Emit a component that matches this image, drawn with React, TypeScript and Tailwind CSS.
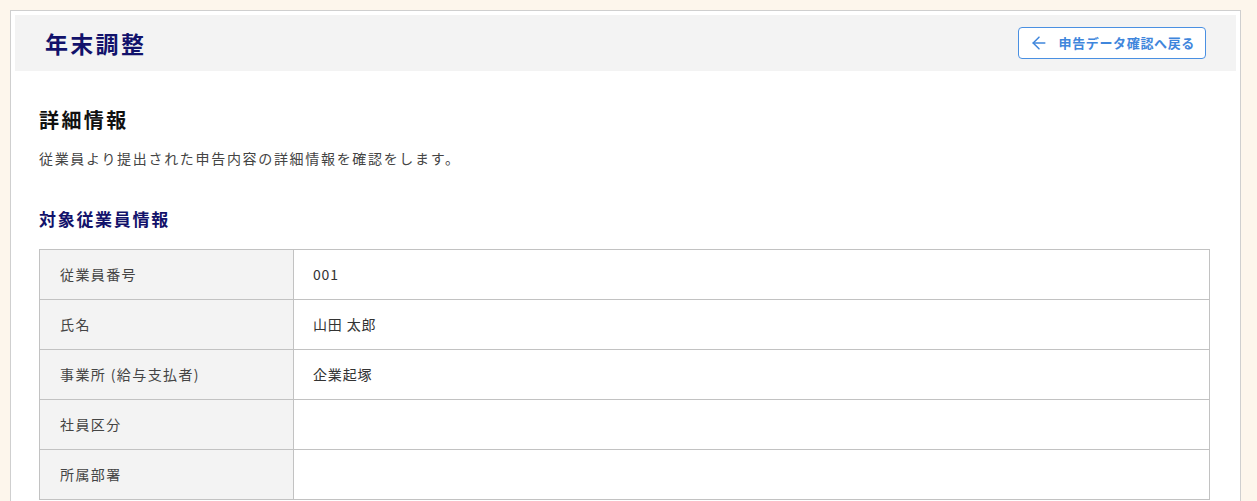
import { ArrowLeft } from "lucide-react";

type Row = { label: string; value: string };

const rows: Row[] = [
  { label: "従業員番号", value: "001" },
  { label: "氏名", value: "山田 太郎" },
  { label: "事業所 (給与支払者)", value: "企業起塚" },
  { label: "社員区分", value: "" },
  { label: "所属部署", value: "" },
];

export default function App() {
  return (
    <div
      className="min-h-screen bg-[#fdf6ec] pb-[10px] pl-[10px] pr-[16px] pt-[10px] text-[#333]"
      style={{ fontFamily: '"Noto Sans CJK JP", "Noto Sans", sans-serif' }}
    >
      <div className="border border-[#cfcfcf] bg-white p-[4px]">
        <header className="flex h-[56px] items-center justify-between bg-[#f3f3f3] pl-[30px] pr-[30px]">
          <h1 className="text-[23px] font-bold leading-none tracking-[0.1em] text-[#12126b]">
            年末調整
          </h1>
          <button
            type="button"
            className="flex h-[32px] items-center gap-[9px] rounded-[4px] border border-[#4a90e2] bg-white pl-[10px] pr-[10px] text-[13px] font-bold tracking-[0.05em] text-[#3f86dc]"
          >
            <ArrowLeft size={20} strokeWidth={1.8} />
            申告データ確認へ戻る
          </button>
        </header>

        <main className="pl-[24px] pr-[26px] pt-[35px]">
          <h2 className="text-[20px] font-bold leading-[28px] tracking-[0.12em] text-[#111]">
            詳細情報
          </h2>
          <p className="mt-[14px] text-[14px] leading-[20px] tracking-[0.12em] text-[#444]">
            従業員より提出された申告内容の詳細情報を確認をします。
          </p>

          <h3 className="mt-[39px] text-[17px] font-bold leading-[24px] tracking-[0.1em] text-[#12126b]">
            対象従業員情報
          </h3>

          <table className="mt-[18px] w-full border-collapse text-[14px] tracking-[0.1em]">
            <tbody>
              {rows.map((r) => (
                <tr key={r.label}>
                  <th className="h-[50px] w-[254px] border border-[#c2c2c2] bg-[#f3f3f3] pl-[20px] text-left font-normal text-[#444]">
                    {r.label}
                  </th>
                  <td className="h-[50px] border border-[#c2c2c2] pl-[19px] tracking-[0.06em] text-[#333]">
                    {r.value}
                  </td>
                </tr>
              ))}
            </tbody>
          </table>
        </main>
      </div>
    </div>
  );
}
